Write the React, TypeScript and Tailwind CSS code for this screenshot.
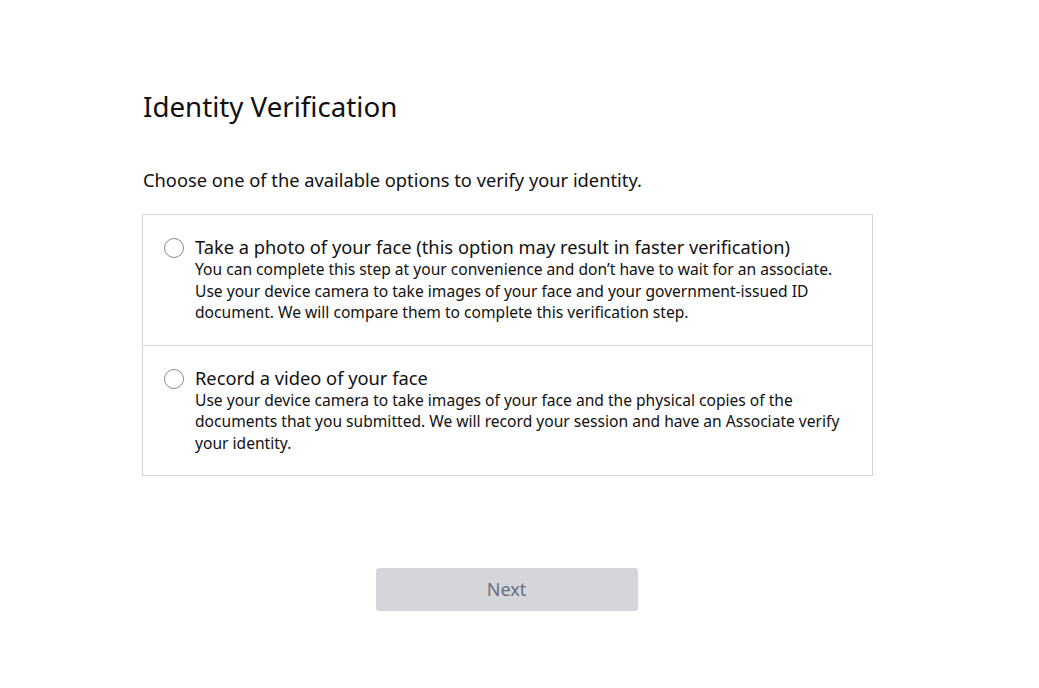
import { useState } from 'react';

const options = [
  {
    id: 'photo',
    title: 'Take a photo of your face (this option may result in faster verification)',
    body: 'You can complete this step at your convenience and don’t have to wait for an associate. Use your device camera to take images of your face and your government-issued ID document. We will compare them to complete this verification step.',
  },
  {
    id: 'video',
    title: 'Record a video of your face',
    body: 'Use your device camera to take images of your face and the physical copies of the documents that you submitted. We will record your session and have an Associate verify your identity.',
  },
];

export default function App() {
  const [selected, setSelected] = useState<string | null>(null);

  return (
    <div className="min-h-screen bg-white text-[#111111] font-['Noto_Sans',sans-serif]">
      <div className="ml-[143px] pt-[88px] w-[730px]">
        <h1 className="text-[27.7px] leading-[36px] font-normal">Identity Verification</h1>
        <p className="mt-[44px] text-[18.3px] leading-[24px]">
          Choose one of the available options to verify your identity.
        </p>

        <div className="mt-[22px] -ml-px border border-[#d5d5d5]">
          {options.map((opt, i) => (
            <label
              key={opt.id}
              className={`flex gap-[11px] pl-[21px] pr-4 pt-[20px] pb-[21px] cursor-pointer ${
                i > 0 ? 'border-t border-[#d5d5d5]' : ''
              }`}
              onClick={() => setSelected(opt.id)}
            >
              <span className="mt-[3px] shrink-0 w-[20px] h-[20px] rounded-full border border-[#8a8a8a] bg-white flex items-center justify-center">
                {selected === opt.id && <span className="w-[10px] h-[10px] rounded-full bg-[#111111]" />}
              </span>
              <span className="flex flex-col">
                <span className="text-[18.3px] leading-[24px]">{opt.title}</span>
                <span className="text-[15.6px] leading-[21.5px] max-w-[655px]">{opt.body}</span>
              </span>
            </label>
          ))}
        </div>

        <div className="mt-[92px] flex justify-center pr-[3px]">
          <button
            disabled={!selected}
            className="w-[262px] h-[43px] rounded-[3px] bg-[#d5d6da] text-[#667080] text-[18px]"
          >
            Next
          </button>
        </div>
      </div>
    </div>
  );
}
